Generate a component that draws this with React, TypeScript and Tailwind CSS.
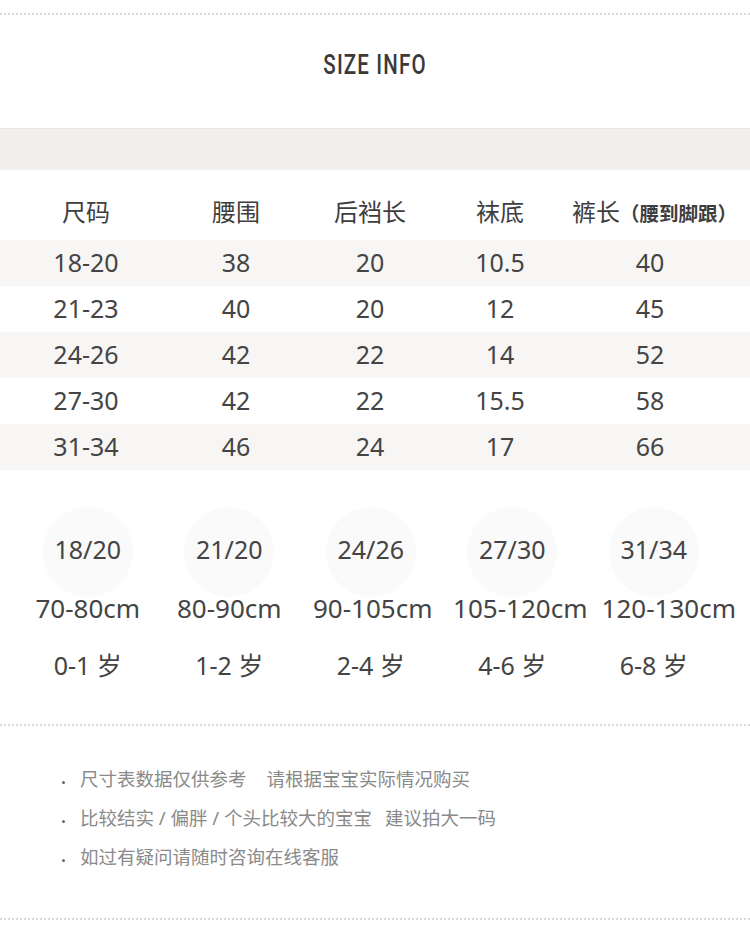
const rows = [
  ["18-20", "38", "20", "10.5", "40"],
  ["21-23", "40", "20", "12", "45"],
  ["24-26", "42", "22", "14", "52"],
  ["27-30", "42", "22", "15.5", "58"],
  ["31-34", "46", "24", "17", "66"],
];

const sizes = [
  { size: "18/20", height: "70-80cm", age: "0-1", shift: "" },
  { size: "21/20", height: "80-90cm", age: "1-2", shift: "" },
  { size: "24/26", height: "90-105cm", age: "2-4", shift: "translate-x-[2px]" },
  { size: "27/30", height: "105-120cm", age: "4-6", shift: "translate-x-[8px]" },
  { size: "31/34", height: "120-130cm", age: "6-8", shift: "translate-x-[15px]" },
];

const cols = "grid grid-cols-[172px_128px_140px_120px_180px]";

function Dotted() {
  return (
    <div className="h-[2px] w-full bg-[repeating-linear-gradient(to_right,#dadada_0_2px,transparent_2px_4px)]" />
  );
}

export default function App() {
  return (
    <div
      className="w-[750px] h-[951px] bg-white text-[#444] overflow-hidden"
      style={{ fontFamily: '"Noto Sans", "Noto Sans CJK SC", sans-serif' }}
    >
      <div className="pt-[13px]">
        <Dotted />
      </div>

      {/* title */}
      <div className="h-[113px] pt-[36px] flex justify-center">
        <span
          className="inline-block text-[27px] leading-[28px] font-medium tracking-[1.5px] text-[#3a3a3a] scale-x-[0.76]"
          style={{ fontFamily: "Roboto, sans-serif" }}
        >
          SIZE INFO
        </span>
      </div>

      <div className="h-[1px] bg-[#e6e5e3]" />
      <div className="h-[41px] bg-[#f0efed]" />

      {/* table header */}
      <div className={`${cols} h-[70px] pt-[26px] text-[24px] leading-[32px] text-[#3e3e3e]`}>
        <div className="text-center">尺码</div>
        <div className="text-center">腰围</div>
        <div className="text-center">后裆长</div>
        <div className="text-center">袜底</div>
        <div className="pl-[12px] whitespace-nowrap">
          裤长<span className="text-[19.5px] font-bold">（腰到脚跟）</span>
        </div>
      </div>

      {/* table rows */}
      {rows.map((r, i) => (
        <div
          key={i}
          className={`${cols} h-[46px] items-center text-[25px] ${i % 2 === 0 ? "bg-[#f7f6f4]" : "bg-white"}`}
        >
          {r.map((c, j) => (
            <div key={j} className="text-center">
              {c}
            </div>
          ))}
        </div>
      ))}

      {/* size circles */}
      <div className="mt-[37px] ml-[17px] grid grid-cols-[repeat(5,141.5px)]">
        {sizes.map((s) => (
          <div key={s.size} className="flex flex-col items-center">
            <div className="w-[90px] h-[90px] rounded-full bg-[#fafafa] flex items-center justify-center pb-[4px] text-[25px]">
              {s.size}
            </div>
            <div className={`-mt-[1px] text-[26px] leading-[24px] whitespace-nowrap ${s.shift}`}>
              {s.height}
            </div>
            <div className="mt-[33px] text-[25px] leading-[24px] whitespace-nowrap">
              {s.age} 岁
            </div>
          </div>
        ))}
      </div>

      <div className="mt-[47px]">
        <Dotted />
      </div>

      {/* notes */}
      <ul className="mt-[41px] flex flex-col gap-[15px] pl-[62px] text-[18.5px] leading-[24px] text-[#8a8a8a]">
        <li className="flex items-center">
          <span className="w-[3px] h-[3px] rounded-full bg-[#666] mr-[15px] mt-[6px]" />
          尺寸表数据仅供参考<span className="w-[20px]" />请根据宝宝实际情况购买
        </li>
        <li className="flex items-center">
          <span className="w-[3px] h-[3px] rounded-full bg-[#666] mr-[15px] mt-[6px]" />
          比较结实 / 偏胖 / 个头比较大的宝宝<span className="w-[13px]" />建议拍大一码
        </li>
        <li className="flex items-center">
          <span className="w-[3px] h-[3px] rounded-full bg-[#666] mr-[15px] mt-[6px]" />
          如过有疑问请随时咨询在线客服
        </li>
      </ul>

      <div className="mt-[49px]">
        <Dotted />
      </div>
    </div>
  );
}
